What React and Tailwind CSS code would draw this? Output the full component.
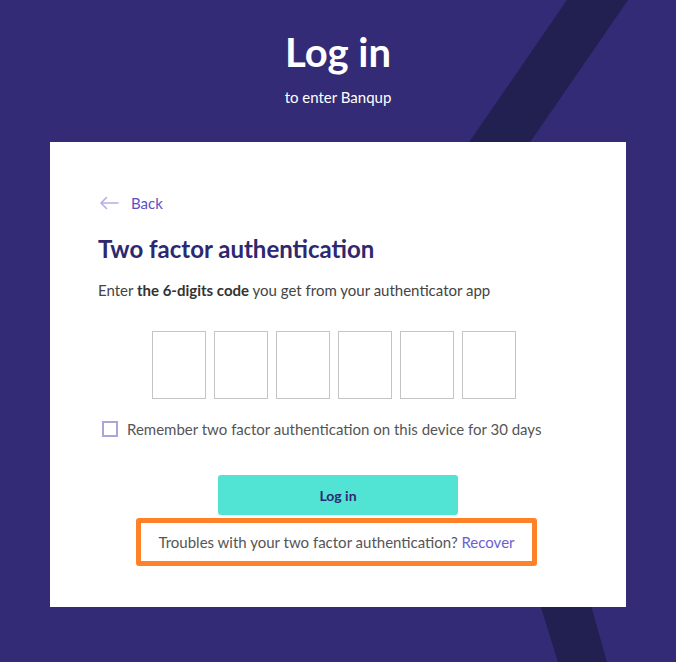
import { useState } from "react";

function Stripe() {
  return (
    <svg
      className="absolute inset-0 w-full h-full"
      viewBox="0 0 676 662"
      preserveAspectRatio="none"
    >
      <polygon
        points="567,0 628,0 480,215 607,662 558,662 419,215"
        fill="#221f51"
      />
    </svg>
  );
}

export default function App() {
  const [code] = useState(["", "", "", "", "", ""]);

  return (
    <div
      className="relative w-full min-h-[662px] bg-[#332b76] overflow-hidden"
      style={{ fontFamily: "Lato, 'Noto Sans', sans-serif" }}
    >
      <Stripe />

      <div className="relative flex flex-col items-center">
        {/* Header */}
        <h1 className="mt-[29px] text-[40px] leading-[46px] font-bold text-white">
          Log in
        </h1>
        <p className="mt-[12px] text-[15px] leading-[20px] text-white">
          to enter Banqup
        </p>

        {/* Card */}
        <div className="mt-[35px] w-[576px] h-[465px] bg-white pl-[48px] pr-[40px] pt-[50px] flex flex-col">
          <button className="flex items-center gap-3 text-[15px] text-[#5b4fc4] self-start">
            <svg width="20" height="14" viewBox="0 0 20 14" className="ml-[1px]">
              <path
                d="M19 7H2M7.5 1.5L2 7l5.5 5.5"
                fill="none"
                stroke="#b3aee6"
                strokeWidth="1.6"
                strokeLinecap="round"
                strokeLinejoin="round"
              />
            </svg>
            <span>Back</span>
          </button>

          <h2 className="mt-[19px] text-[24px] leading-[30px] font-bold text-[#2d2870]">
            Two factor authentication
          </h2>

          <p className="mt-[16px] text-[15px] leading-[20px] text-[#444]">
            Enter <b className="font-bold text-[#333]">the 6-digits code</b> you get from your authenticator app
          </p>

          <div className="mt-[31px] flex gap-2 ml-[54px]">
            {code.map((c, i) => (
              <div
                key={i}
                className="w-[54px] h-[68px] border border-[#c4c4c4] bg-white"
              >
                {c}
              </div>
            ))}
          </div>

          <label className="mt-[19px] flex items-center gap-[9px] ml-[4px] text-[15px] text-[#555]">
            <span className="w-[16px] h-[16px] border-2 border-[#aaa5dc] bg-white"></span>
            Remember two factor authentication on this device for 30 days
          </label>

          <button className="mt-[35px] ml-[120px] w-[240px] h-[40px] rounded-[3px] bg-[#51e3d3] text-[14px] font-bold text-[#2d2870]">
            Log in
          </button>

          <div className="mt-[3px] ml-[38px] w-[401px] h-[48px] border-[5px] border-[#ff8228] rounded-[3px] flex items-center justify-center text-[15px] text-[#555]">
            <span>
              Troubles with your two factor authentication?{" "}
              <a className="text-[#6a5fd2]">Recover</a>
            </span>
          </div>
        </div>
      </div>
    </div>
  );
}
